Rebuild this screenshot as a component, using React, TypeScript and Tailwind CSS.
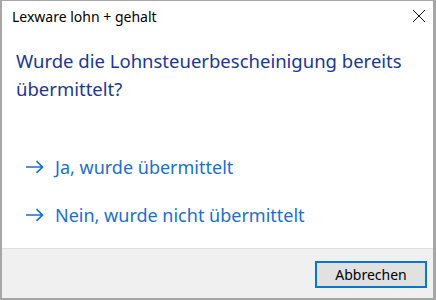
import React from 'react';

const font = { fontFamily: '"Noto Sans", "Open Sans", sans-serif' };

const Arrow: React.FC = () => (
    <svg width="19" height="14" viewBox="0 0 19 14" className="shrink-0">
        <path d="M1 7H17.5M11.5 1.2L17.5 7L11.5 12.8" fill="none" stroke="#1a6fd2" strokeWidth="1.7" />
    </svg>
);

const CommandLink: React.FC<{ label: string }> = ({ label }) => (
    <button className="flex items-center h-[30px] pl-[23px] text-left text-[#1a6fd2] text-[18px] font-['Noto_Sans',sans-serif]">
        <Arrow />
        <span className="ml-[11px]">{label}</span>
    </button>
);

export default function App() {
    return (
        <div style={font} className="w-[436px] h-[300px] bg-white border-[#a6a6a6] border-l-2 border-t border-r-[3px] border-b-2 flex flex-col">
            <div className="h-[30px] flex items-center justify-between pl-[10px] pr-[7px]">
                <span className="text-[14px] text-black font-['Noto_Sans',sans-serif]">Lexware lohn + gehalt</span>
                <svg width="14" height="14" viewBox="0 0 14 14">
                    <path d="M1 1L13 13M13 1L1 13" stroke="#111" strokeWidth="1" fill="none" />
                </svg>
            </div>
            <div className="flex-1 flex flex-col">
                <p className="pl-[14px] pt-[16px] text-[18.5px] leading-[28px] text-[#1a3796] font-['Noto_Sans',sans-serif]">
                    Wurde die Lohnsteuerbescheinigung bereits übermittelt?
                </p>
                <div className="mt-[49px] flex flex-col gap-[18px]">
                    <CommandLink label="Ja, wurde übermittelt" />
                    <CommandLink label="Nein, wurde nicht übermittelt" />
                </div>
            </div>
            <div className="h-[50px] bg-[#f0f0f0] border-t border-[#dfdfdf] flex items-center justify-end pr-[6px]">
                <button className="w-[112px] h-[27px] mt-[1px] border-2 border-[#0078d7] bg-[#e1e1e1] text-[14px] text-black font-['Noto_Sans',sans-serif]">
                    Abbrechen
                </button>
            </div>
        </div>
    );
}
